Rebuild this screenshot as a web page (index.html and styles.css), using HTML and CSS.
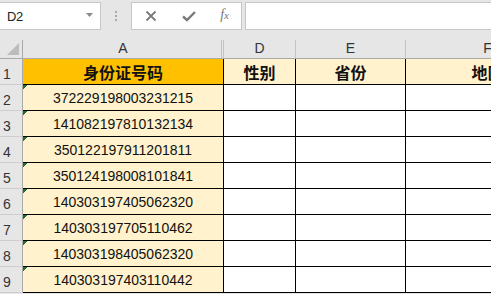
FILE: index.html
```html
<!DOCTYPE html>
<html lang="zh">
<head>
<meta charset="utf-8">
<link rel="stylesheet" href="styles.css">
</head>
<body>
<div class="app">
  <div class="fbar">
    <div class="namebox">
      <span class="ref">D2</span>
      <svg class="caret" width="7" height="4" viewBox="0 0 7 4"><path d="M0 0H7L3.5 4Z" fill="#8a8a8a"/></svg>
    </div>
    <div class="grip"><i></i><i></i><i></i></div>
    <div class="tools">
      <svg width="12" height="12" viewBox="0 0 12 12"><path d="M1.5 1.5L10.5 10.5M10.5 1.5L1.5 10.5" stroke="#7a7a7a" stroke-width="1.8" fill="none"/></svg>
      <svg width="14" height="12" viewBox="0 0 14 12"><path d="M1 6.5L5 10L13 2" stroke="#7a7a7a" stroke-width="2.4" fill="none"/></svg>
      <span class="fx"><i>f</i><span class="x">x</span></span>
    </div>
    <div class="input"></div>
  </div>
  <div class="sheet">
    <div class="hd corner"><svg width="12" height="12" viewBox="0 0 12 12"><path d="M12 0V12H0Z" fill="#bcbcbc"/></svg></div>
    <div class="hd col cola">A</div>
    <div class="hd col">D</div>
    <div class="hd col">E</div>
    <div class="hd col">F</div>

    <div class="rh">1</div>
    <div class="c title orange">身份证号码</div>
    <div class="c title">性别</div>
    <div class="c title">省份</div>
    <div class="c title">地区</div>

    <div class="rh">2</div><div class="c id">372229198003231215</div><div class="c"></div><div class="c"></div><div class="c"></div>
    <div class="rh">3</div><div class="c id">141082197810132134</div><div class="c"></div><div class="c"></div><div class="c"></div>
    <div class="rh">4</div><div class="c id">350122197911201811</div><div class="c"></div><div class="c"></div><div class="c"></div>
    <div class="rh">5</div><div class="c id">350124198008101841</div><div class="c"></div><div class="c"></div><div class="c"></div>
    <div class="rh">6</div><div class="c id">140303197405062320</div><div class="c"></div><div class="c"></div><div class="c"></div>
    <div class="rh">7</div><div class="c id">140303197705110462</div><div class="c"></div><div class="c"></div><div class="c"></div>
    <div class="rh">8</div><div class="c id">140303198405062320</div><div class="c"></div><div class="c"></div><div class="c"></div>
    <div class="rh">9</div><div class="c id">140303197403110442</div><div class="c"></div><div class="c"></div><div class="c"></div>
  </div>
</div>
</body>
</html>
```

FILE: styles.css
```css
html, body {
  margin: 0;
  padding: 0;
  background: #e6e6e6;
  overflow: hidden;
}
.app {
  width: 491px;
  height: 294px;
  overflow: hidden;
  font-family: "Liberation Sans", Arial, sans-serif;
}
.fbar {
  height: 40px;
  box-sizing: border-box;
  padding-top: 2px;
  display: flex;
  align-items: flex-start;
  background: #e6e6e6;
}
.namebox {
  width: 101px;
  height: 28px;
  box-sizing: border-box;
  background: #fff;
  border: 1px solid #c6c6c6;
  border-left: none;
  display: flex;
  align-items: center;
  justify-content: space-between;
  padding: 0 7px 0 7px;
}
.ref {
  font-size: 13px;
  color: #222;
  letter-spacing: -0.3px;
}
.caret {
  display: block;
  margin-top: -2px;
}
.grip {
  width: 30px;
  height: 28px;
  display: flex;
  flex-direction: column;
  align-items: center;
  justify-content: center;
  gap: 2px;
}
.grip i {
  display: block;
  width: 2px;
  height: 2px;
  background: #aaa;
}
.tools {
  width: 111px;
  height: 28px;
  box-sizing: border-box;
  background: #fff;
  border: 1px solid #c6c6c6;
  display: flex;
  align-items: center;
  justify-content: space-between;
  padding: 0 12px 0 13px;
}
.tools svg { display: block; }
.fx {
  font-family: "Liberation Serif", serif;
  font-style: italic;
  color: #777;
  font-size: 14px;
  line-height: 1;
  margin-top: -2px;
}
.fx i { font-style: italic; }
.fx .x { font-size: 11px; }
.input {
  flex: 1;
  margin-left: 3px;
  height: 28px;
  box-sizing: border-box;
  background: #fff;
  border: 1px solid #c6c6c6;
  border-right: none;
}
.sheet {
  display: grid;
  grid-template-columns: 23px 201px 72px 110px 164px;
  grid-template-rows: 19px repeat(9, 26px);
  width: 570px;
}
.sheet > div {
  box-sizing: border-box;
}
.hd {
  background: #e6e6e6;
  border-bottom: 1px solid #a9a9a9;
  border-right: 1px solid #c3c3c3;
  font-size: 14px;
  color: #333;
  display: flex;
  align-items: flex-end;
  justify-content: center;
  padding-bottom: 2px;
}
.corner {
  border-right: 1px solid #a9a9a9;
  justify-content: flex-end;
  padding: 0 3px 3px 0;
}
.corner svg { display: block; }
.cola {
  box-shadow: inset -1px 0 0 #e6e6e6, inset -2px 0 0 #c3c3c3;
}
.rh {
  background: #e6e6e6;
  border-right: 1px solid #a9a9a9;
  border-bottom: 1px solid #cdcdcd;
  font-size: 14px;
  color: #333;
  display: flex;
  align-items: flex-end;
  padding: 0 0 2px 3px;
}
.c {
  background: #fff;
  border-right: 1px solid #000;
  border-bottom: 1px solid #000;
  display: flex;
  align-items: center;
  justify-content: center;
  color: #111;
}
.title {
  background: #fff2cc;
  font-family: "Noto Sans CJK SC", sans-serif;
  font-weight: bold;
  font-size: 16px;
  white-space: nowrap;
  overflow: hidden;
}
.orange {
  background: #ffc000;
}
.id {
  font-size: 14px;
  padding-top: 1px;
  background: linear-gradient(135deg, #1e6f34 0 3px, transparent 3px) no-repeat 0 0 / 6px 6px, #fff2cc;
}
```
